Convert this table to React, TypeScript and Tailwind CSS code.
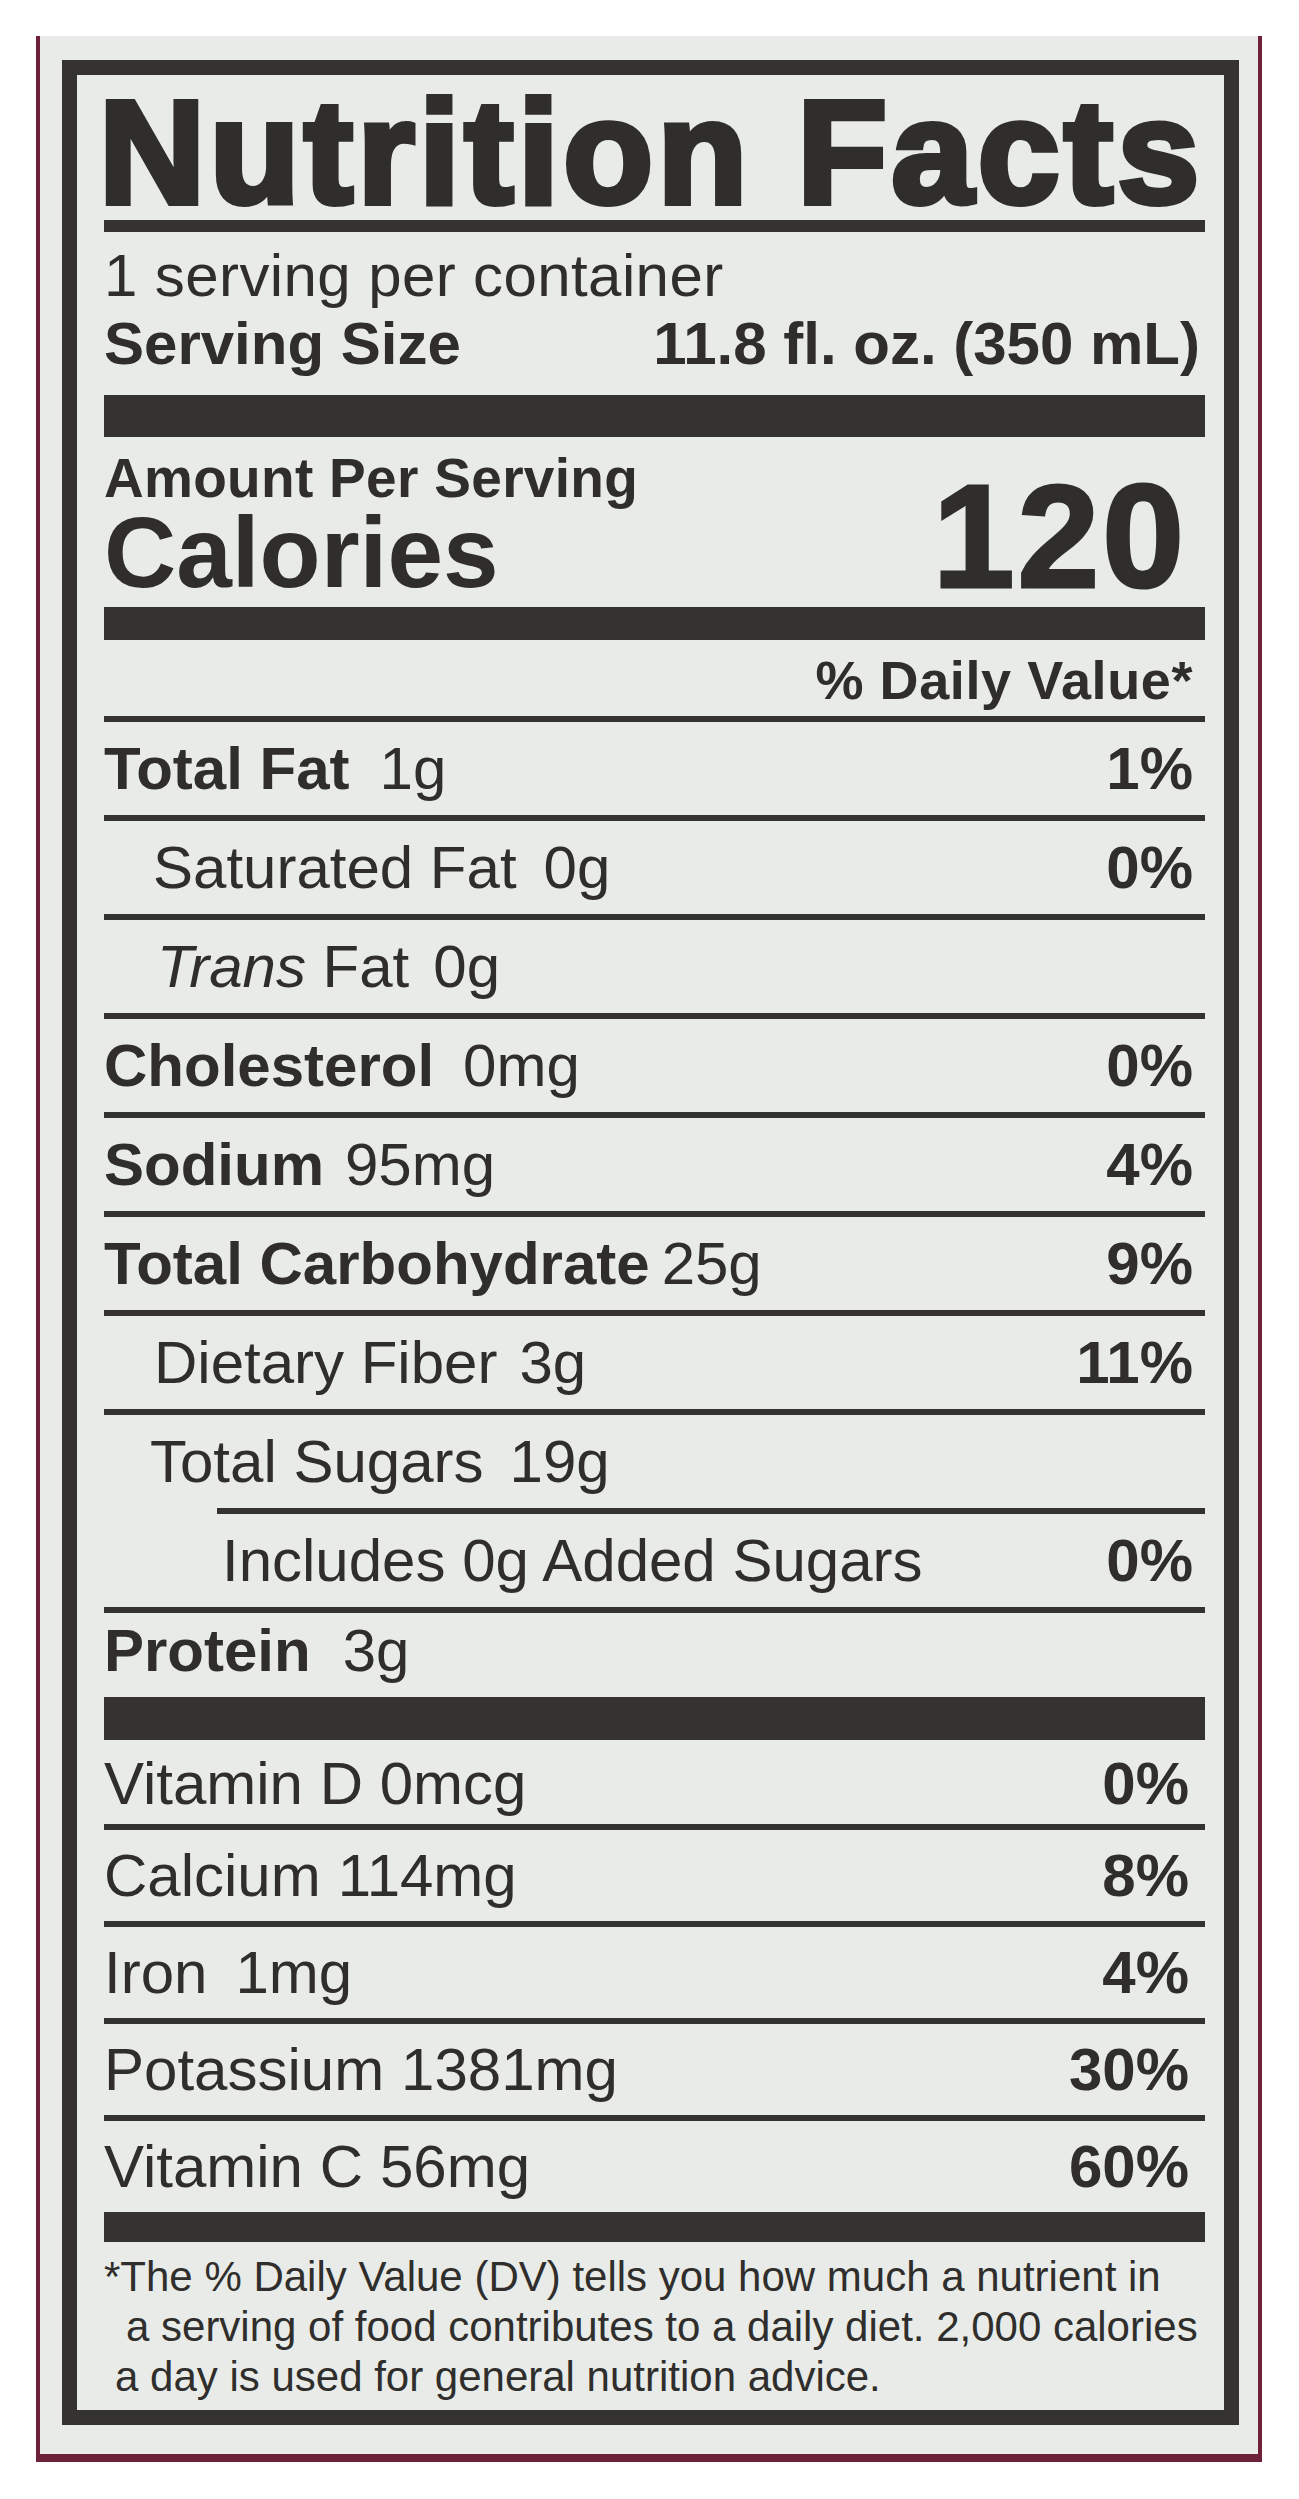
import React from 'react';

type Nutrient = {
  label: string;
  italic?: string;
  amount?: string;
  dv?: string;
  bold?: boolean;
  indent: string;
  gap: string;
  ruleIndent?: boolean;
};

const nutrients: Nutrient[] = [
  { label: 'Total Fat', amount: '1g', dv: '1%', bold: true, indent: 'pl-0', gap: 'ml-[30px]' },
  { label: 'Saturated Fat', amount: '0g', dv: '0%', indent: 'pl-[49px]', gap: 'ml-[27px]' },
  { label: 'Fat', italic: 'Trans', amount: '0g', indent: 'pl-[53px]', gap: 'ml-[24px]' },
  { label: 'Cholesterol', amount: '0mg', dv: '0%', bold: true, indent: 'pl-0', gap: 'ml-[29px]' },
  { label: 'Sodium', amount: '95mg', dv: '4%', bold: true, indent: 'pl-0', gap: 'ml-[21px]' },
  { label: 'Total Carbohydrate', amount: '25g', dv: '9%', bold: true, indent: 'pl-0', gap: 'ml-[12px]' },
  { label: 'Dietary Fiber', amount: '3g', dv: '11%', indent: 'pl-[50px]', gap: 'ml-[22px]' },
  { label: 'Total Sugars', amount: '19g', indent: 'pl-[46px]', gap: 'ml-[26px]' },
  { label: 'Includes 0g Added Sugars', dv: '0%', indent: 'pl-[118px]', gap: 'ml-0', ruleIndent: true },
];

const vitamins = [
  { label: 'Calcium', amount: '114mg', gap: 'ml-[17px]', dv: '8%' },
  { label: 'Iron', amount: '1mg', gap: 'ml-[28px]', dv: '4%' },
  { label: 'Potassium', amount: '1381mg', gap: 'ml-[17px]', dv: '30%' },
  { label: 'Vitamin C', amount: '56mg', gap: 'ml-[17px]', dv: '60%' },
];

function Rule({ indent }: { indent?: boolean }) {
  return <div className={indent ? 'ml-[113px] h-[6px] bg-[#343331]' : 'h-[6px] bg-[#343331]'} />;
}

export default function App() {
  return (
    <div className="min-h-[2499px] w-[1299px] bg-white pl-[36px] pt-[36px] font-['Liberation_Sans',Arial,sans-serif] text-[#2f2e2c]">
      <div className="h-[2426px] w-[1226px] border-b-[8px] border-l-[4px] border-r-[4px] border-[#6e2038] bg-[#e8ebe7] pl-[22px] pt-[24px]">
        <div className="h-[2365px] w-[1177px] border-[15px] border-[#343331] pl-[27px] pr-[19px]">
          {/* Title */}
          <div className="-ml-[5px] whitespace-nowrap pt-[10px] text-[147px] font-bold leading-[135px] tracking-[4.5px] [-webkit-text-stroke:6px_#2f2e2c]">
            Nutrition Facts
          </div>
          <div className="h-[12px] bg-[#343331]" />

          {/* Servings */}
          <div className="pb-[17px] pt-[10px] text-[60px] leading-[68px]">
            <div className="tracking-[0.4px]">1 serving per container</div>
            <div className="flex justify-between pr-[5px] font-bold">
              <span>Serving Size</span>
              <span>11.8 fl. oz. (350 mL)</span>
            </div>
          </div>
          <div className="h-[42px] bg-[#343331]" />

          {/* Calories */}
          <div className="flex items-end justify-between pb-[9px] pr-[18px] pt-[14px] font-bold">
            <div>
              <div className="text-[55px] leading-[55px] tracking-[0.3px]">Amount Per Serving</div>
              <div className="text-[100px] leading-[92px]">Calories</div>
            </div>
            <div className="text-[147px] leading-[124px] tracking-[3px] [-webkit-text-stroke:3px_#2f2e2c]">120</div>
          </div>
          <div className="h-[33px] bg-[#343331]" />

          <div className="pr-[12px] pt-[4px] text-right text-[54px] font-bold leading-[72px] tracking-[0.6px]">% Daily Value*</div>

          {nutrients.map((n) => (
            <React.Fragment key={n.label + (n.italic ?? '')}>
              <Rule indent={n.ruleIndent} />
              <div className="flex h-[93px] items-center justify-between whitespace-nowrap pr-[12px] text-[60px] leading-none">
                <div className={n.indent}>
                  {n.italic && <span className="italic">{n.italic} </span>}
                  <span className={n.bold ? 'font-bold' : ''}>{n.label}</span>
                  {n.amount && <span className={n.gap}>{n.amount}</span>}
                </div>
                {n.dv && <div className="font-bold">{n.dv}</div>}
              </div>
            </React.Fragment>
          ))}

          <Rule />
          <div className="flex h-[84px] items-center pb-[8px] text-[60px] leading-none">
            <span className="font-bold">Protein</span>
            <span className="ml-[32px]">3g</span>
          </div>
          <div className="h-[43px] bg-[#343331]" />

          <div className="flex h-[84px] items-center justify-between pr-[16px] pt-[4px] text-[60px] leading-none">
            <span>Vitamin D 0mcg</span>
            <span className="font-bold">0%</span>
          </div>
          {vitamins.map((v) => (
            <React.Fragment key={v.label}>
              <Rule />
              <div className="flex h-[91px] items-center justify-between whitespace-nowrap pr-[16px] text-[60px] leading-none">
                <div>
                  <span>{v.label}</span>
                  <span className={v.gap}>{v.amount}</span>
                </div>
                <span className="font-bold">{v.dv}</span>
              </div>
            </React.Fragment>
          ))}
          <div className="h-[30px] bg-[#343331]" />

          {/* Footnote */}
          <div className="whitespace-nowrap pt-[10px] text-[42px] leading-[50px]">
            <div>*The % Daily Value (DV) tells you how much a nutrient in</div>
            <div className="pl-[22px]">a serving of food contributes to a daily diet. 2,000 calories</div>
            <div className="pl-[11px]">a day is used for general nutrition advice.</div>
          </div>
        </div>
      </div>
    </div>
  );
}
